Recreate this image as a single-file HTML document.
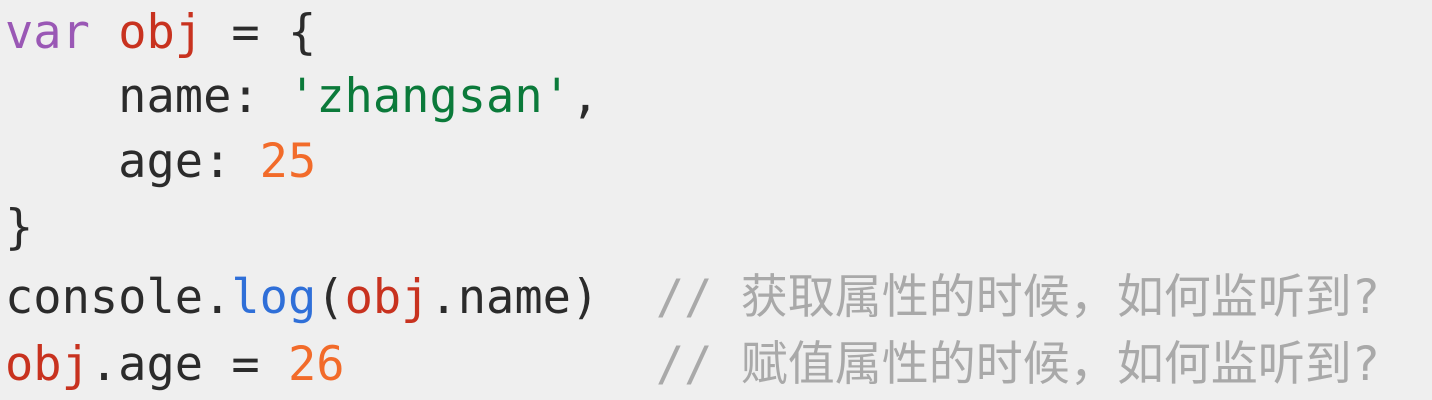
<!DOCTYPE html>
<html><head><meta charset="utf-8"><style>
html,body{margin:0;padding:0;width:1432px;height:400px;background:#efefef;overflow:hidden}
.l{position:absolute;left:5px;font-family:"DejaVu Sans Mono","Liberation Mono","Noto Sans CJK SC",monospace;font-size:47px;line-height:60px;white-space:pre;color:#2b2b2b}
.k{color:#9a58b5}.v{color:#c8321f}.s{color:#0b7a3a}.n{color:#f26b2a}.f{color:#2f6fd8}
.c{color:#a9a9a9;font-family:"DejaVu Sans Mono","Noto Sans CJK SC",monospace}
</style></head><body>
<div class="l" style="top:3px"><span class="k">var</span> <span class="v">obj</span> = {</div>
<div class="l" style="top:67px">    name: <span class="s">'zhangsan'</span>,</div>
<div class="l" style="top:132px">    age: <span class="n">25</span></div>
<div class="l" style="top:198px">}</div>
<div class="l" style="top:268px">console.<span class="f">log</span>(<span class="v">obj</span>.name)  <span class="c">// 获取属性的时候，如何监听到?</span></div>
<div class="l" style="top:335px"><span class="v">obj</span>.age = <span class="n">26</span>           <span class="c">// 赋值属性的时候，如何监听到?</span></div>
</body></html>
